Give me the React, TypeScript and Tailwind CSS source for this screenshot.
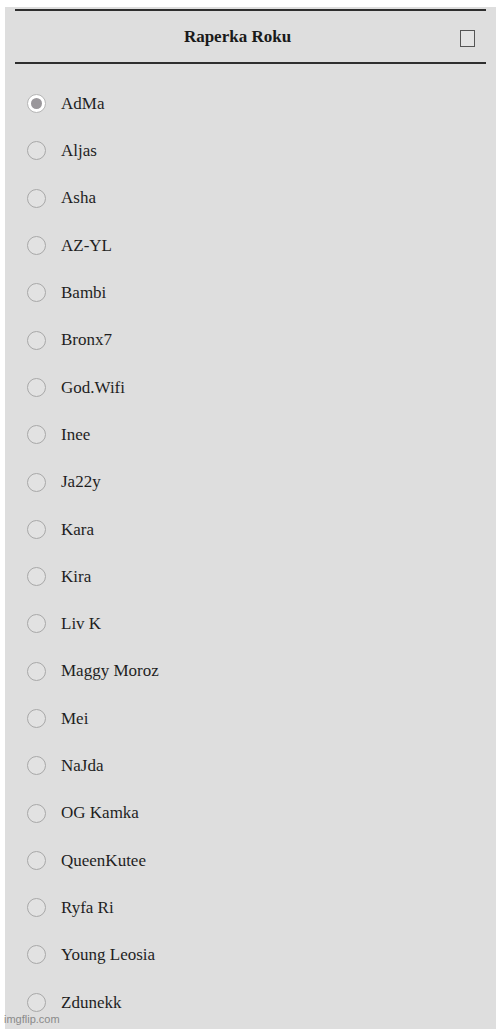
const names = [
  "AdMa",
  "Aljas",
  "Asha",
  "AZ-YL",
  "Bambi",
  "Bronx7",
  "God.Wifi",
  "Inee",
  "Ja22y",
  "Kara",
  "Kira",
  "Liv K",
  "Maggy Moroz",
  "Mei",
  "NaJda",
  "OG Kamka",
  "QueenKutee",
  "Ryfa Ri",
  "Young Leosia",
  "Zdunekk",
];

function Radio({ checked }: { checked: boolean }) {
  return (
    <span
      className={
        checked
          ? "w-[19px] h-[19px] rounded-full border border-[#b5b5b5] bg-white flex items-center justify-center shrink-0"
          : "w-[19px] h-[19px] rounded-full border border-[#a8a8a8] bg-[#e2e2e2] shrink-0"
      }
    >
      {checked && <span className="w-[11px] h-[11px] rounded-full bg-[#9a979b]" />}
    </span>
  );
}

export default function App() {
  return (
    <div className="relative w-[500px] h-[1029px] bg-white overflow-hidden font-['Liberation_Serif',serif]">
      <div className="ml-[5px] mr-[4px] mt-[7px] h-[1022px] bg-[#dedede] px-[10px] pt-[2px]">
        <header className="relative h-[55px] border-t-2 border-b-2 border-[#2e2e2e] flex items-center justify-center pr-[26px]">
          <h1 className="text-[17px] font-bold text-[#1a1a1a] mt-[1px]">Raperka Roku</h1>
          <span className="absolute right-[11px] top-[19px] w-[15px] h-[17px] border border-[#555] bg-[#e4e4e4]" />
        </header>
        <ul className="pt-[16px] pl-[12px]">
          {names.map((n, i) => (
            <li key={n} className="h-[47.3px] flex items-center gap-[15px]">
              <Radio checked={i === 0} />
              <span className="text-[17px] text-[#1e1e1e]">{n}</span>
            </li>
          ))}
        </ul>
      </div>
      <span className="absolute left-[4px] bottom-[2px] text-[11px] text-[#8a8a8a] font-['Liberation_Sans',sans-serif]">
        imgflip.com
      </span>
    </div>
  );
}
